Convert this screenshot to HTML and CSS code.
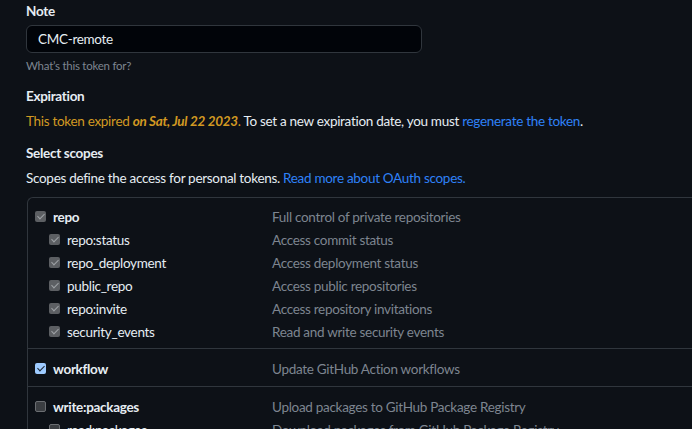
FILE: index.html
```html
<!DOCTYPE html>
<html>
<head>
<meta charset="utf-8">
<link rel="stylesheet" href="styles.css">
</head>
<body>
<div class="page">
  <div class="group">
    <div class="label">Note</div>
    <div class="input">CMC-remote</div>
    <div class="hint">What’s this token for?</div>
  </div>
  <div class="group">
    <div class="label">Expiration</div>
    <p class="line"><span class="warn">This token expired <em>on Sat, Jul 22 2023</em>.</span> To set a new expiration date, you must <a class="link">regenerate the token</a>.</p>
  </div>
  <div class="group last">
    <div class="label">Select scopes</div>
    <p class="line">Scopes define the access for personal tokens. <a class="link">Read more about OAuth scopes.</a></p>
  </div>
  <div class="scopes">
    <div class="section first">
      <div class="row parent"><span class="cb dis"></span><span class="name">repo</span><span class="desc">Full control of private repositories</span></div>
      <div class="row child"><span class="cb dis"></span><span class="name">repo:status</span><span class="desc">Access commit status</span></div>
      <div class="row child"><span class="cb dis"></span><span class="name">repo_deployment</span><span class="desc">Access deployment status</span></div>
      <div class="row child"><span class="cb dis"></span><span class="name">public_repo</span><span class="desc">Access public repositories</span></div>
      <div class="row child"><span class="cb dis"></span><span class="name">repo:invite</span><span class="desc">Access repository invitations</span></div>
      <div class="row child"><span class="cb dis"></span><span class="name">security_events</span><span class="desc">Read and write security events</span></div>
    </div>
    <div class="section">
      <div class="row parent"><span class="cb on"></span><span class="name">workflow</span><span class="desc">Update GitHub Action workflows</span></div>
    </div>
    <div class="section">
      <div class="row parent"><span class="cb off"></span><span class="name">write:packages</span><span class="desc">Upload packages to GitHub Package Registry</span></div>
      <div class="row child"><span class="cb off"></span><span class="name">read:packages</span><span class="desc">Download packages from GitHub Package Registry</span></div>
    </div>
  </div>
</div>
</body>
</html>
```
FILE: styles.css
```css
html, body {
  margin: 0;
  padding: 0;
  background: #0d1117;
  overflow: hidden;
}
body {
  font-family: Lato, "Liberation Sans", sans-serif;
  font-size: 13.5px;
  letter-spacing: -0.3px;
  color: #e6edf3;
  width: 692px;
  height: 429px;
}
.page {
  padding: 1px 0 0 26px;
}
.group {
  margin-bottom: 11px;
}
.group.last {
  margin-bottom: 0;
}
.label {
  font-weight: 700;
  line-height: 20px;
  margin-bottom: 4px;
}
.input {
  box-sizing: border-box;
  width: 396px;
  height: 28px;
  line-height: 26px;
  border: 1px solid #30363d;
  border-radius: 6px;
  background: #010409;
  padding: 0 11px;
}
.hint {
  font-size: 11.5px;
  letter-spacing: -0.25px;
  color: #7d8590;
  line-height: 18px;
  margin-top: 4px;
}
.line {
  margin: 2px 0 0;
  line-height: 22px;
}
.warn {
  color: #d29922;
}
.warn em {
  font-weight: 700;
}
.link {
  color: #2f81f7;
}
.scopes {
  margin-top: 8px;
  margin-left: 1px;
  border-top: 1px solid #30363d;
  border-left: 1px solid #30363d;
  border-top-left-radius: 6px;
}
.section {
  padding: 8px 0 6px;
  border-bottom: 1px solid #30363d;
}
.section.first {
  padding: 7px 0 5px;
}
.row {
  display: flex;
  align-items: center;
  height: 23px;
}
.row.child {
  padding-left: 14px;
}
.cb {
  box-sizing: border-box;
  width: 11px;
  height: 11px;
  border-radius: 2px;
  margin: 0 7px 0 7px;
  flex: none;
  position: relative;
}
.cb.dis {
  background: #5c5f63;
}
.cb.dis::after, .cb.on::after {
  content: "";
  position: absolute;
  left: 3.5px;
  top: 1px;
  width: 3px;
  height: 6px;
  border: solid #9ea2a6;
  border-width: 0 1.5px 1.5px 0;
  transform: rotate(45deg);
}
.cb.on {
  background: #9ecbff;
}
.cb.on::after {
  border-color: #1b2430;
}
.cb.off {
  background: #3b3e42;
  border: 1px solid #6b6e72;
}
.name {
  width: 219px;
  flex: none;
}
.parent .name {
  font-weight: 700;
}
.child .name {
  width: 205px;
}
.desc {
  color: #7d8590;
  white-space: nowrap;
}
```
